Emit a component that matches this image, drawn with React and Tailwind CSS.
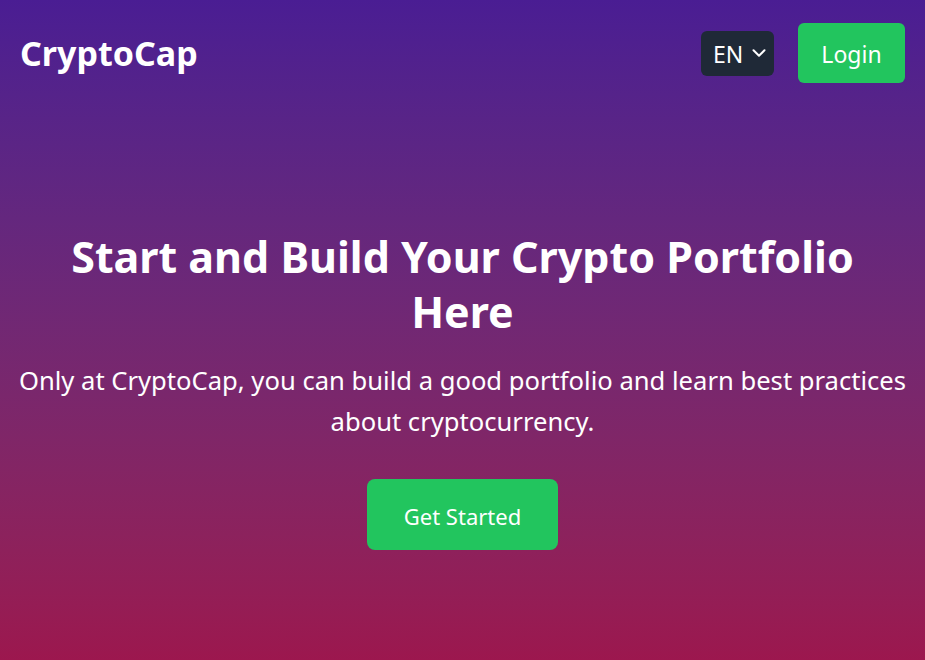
import { ChevronDown } from "lucide-react";

export default function App() {
  return (
    <div
      className="min-h-screen w-full bg-gradient-to-b from-[#4a1d93] to-[#9c174e] text-white"
      style={{ fontFamily: '"Noto Sans", "Open Sans", sans-serif' }}
    >
      <header className="flex items-center justify-between px-5 pt-[23px]">
        <h1 className="text-[34px] font-bold leading-[60px]">CryptoCap</h1>
        <div className="flex items-center gap-6">
          <div className="flex h-[45px] w-[73px] items-center justify-between rounded-md bg-[#1f2937] pl-3 pr-[4px] text-[23px]">
            <span className="pt-[2px]">EN</span>
            <ChevronDown className="h-[22px] w-[22px]" strokeWidth={2.2} />
          </div>
          <button className="h-[60px] w-[107px] rounded-md bg-[#22c55e] pt-[3px] text-[23px]">Login</button>
        </div>
      </header>

      <main className="flex flex-col items-center px-4 pt-[146px] text-center">
        <h2 className="text-[43px] font-bold leading-[55px]">
          Start and Build Your Crypto Portfolio
          <br />
          Here
        </h2>
        <p className="mt-[21px] text-[25.6px] leading-[41px]">
          Only at CryptoCap, you can build a good portfolio and learn best practices
          <br />
          about cryptocurrency.
        </p>
        <button className="mt-[37px] h-[71px] w-[191px] rounded-lg bg-[#22c55e] pt-[3px] text-[22px]">
          Get Started
        </button>
      </main>
    </div>
  );
}
